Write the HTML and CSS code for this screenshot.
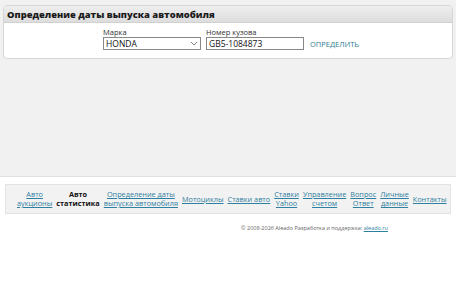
FILE: index.html
```html
<!DOCTYPE html>
<html lang="ru">
<head>
<meta charset="utf-8">
<link rel="stylesheet" href="styles.css">
</head>
<body>
<div class="main">
  <div class="panel">
    <div class="panel-head">Определение даты выпуска автомобиля</div>
    <div class="panel-body">
      <div class="field">
        <label class="lbl">Марка</label>
        <div class="select"><span>HONDA</span><svg width="8" height="5" viewBox="0 0 8 5"><path d="M1 1 L4 4 L7 1" fill="none" stroke="#777" stroke-width="0.9"/></svg></div>
      </div>
      <div class="field">
        <label class="lbl">Номер кузова</label>
        <div class="input">GB5-1084873</div>
      </div>
      <a class="btn">ОПРЕДЕЛИТЬ</a>
    </div>
  </div>
</div>
<div class="nav-wrap">
  <div class="nav">
    <a class="nav-item link">Авто<br>аукционы</a>
    <span class="nav-item active">Авто<br>статистика</span>
    <a class="nav-item link">Определение даты<br>выпуска автомобиля</a>
    <a class="nav-item link">Мотоциклы</a>
    <a class="nav-item link">Ставки авто</a>
    <a class="nav-item link">Ставки<br>Yahoo</a>
    <a class="nav-item link">Управление<br>счетом</a>
    <a class="nav-item link">Вопрос<br>Ответ</a>
    <a class="nav-item link">Личные<br>данные</a>
    <a class="nav-item link">Контакты</a>
  </div>
</div>
<div class="copy">© 2008-2026 Aleado Разработка и поддержка: <a class="copy-link">aleado.ru</a></div>
</body>
</html>
```
FILE: styles.css
```css
html, body { margin: 0; padding: 0; }
body {
  background: #fff;
  font-family: "Open Sans", "Noto Sans", sans-serif;
  color: #222;
}
.main {
  background: #f1f1f1;
  height: 177px;
  padding: 5px 3px 0 3px;
  box-sizing: border-box;
  border-bottom: 1px solid #e0e0e0;
}
.panel {
  background: #fff;
  border: 1px solid #d6d6d6;
  border-radius: 4px;
  overflow: hidden;
  height: 54px;
  box-sizing: border-box;
}
.panel-head {
  height: 16px;
  background: linear-gradient(#eeeeee, #dddddd);
  border-bottom: 1px solid #d0d0d0;
  font-weight: 800;
  font-size: 9.4px;
  line-height: 17px;
  padding-left: 3px;
  color: #1a1a1a;
}
.panel-body {
  display: flex;
  align-items: flex-end;
  padding: 4px 0 0 99px;
  gap: 5px;
}
.field { display: flex; flex-direction: column; }
.lbl { font-size: 7.5px; color: #333; line-height: 10px; }
.select, .input {
  box-sizing: border-box;
  height: 13px;
  border: 1px solid #888;
  font-size: 8.5px;
  line-height: 11px;
  padding: 0 2px;
  color: #111;
  background: #fff;
}
.select {
  width: 98px;
  display: flex;
  justify-content: space-between;
  align-items: center;
}
.input { width: 98px; }
.btn {
  font-size: 7.5px;
  color: #2d7a8f;
  line-height: 13px;
  margin-left: 1px;
  position: relative;
  top: 1px;
}
.nav-wrap { padding: 7px 5px 0 5px; }
.nav {
  background: #f2f2f2;
  border: 1px solid #e3e3e3;
  display: flex;
  align-items: center;
  padding: 0 0 0 9px;
  height: 30px;
  box-sizing: border-box;
}
.nav-item {
  font-size: 7.3px;
  line-height: 9px;
  text-align: center;
  padding: 0 2px;
  white-space: nowrap;
}
.link { color: #2f7fa0; text-decoration: underline; }
.active { color: #111; font-weight: 700; }
.copy {
  margin-top: 10px;
  padding-left: 241px;
  font-size: 5.5px;
  color: #666;
}
.copy-link { color: #2f7fa0; text-decoration: underline; }
```
